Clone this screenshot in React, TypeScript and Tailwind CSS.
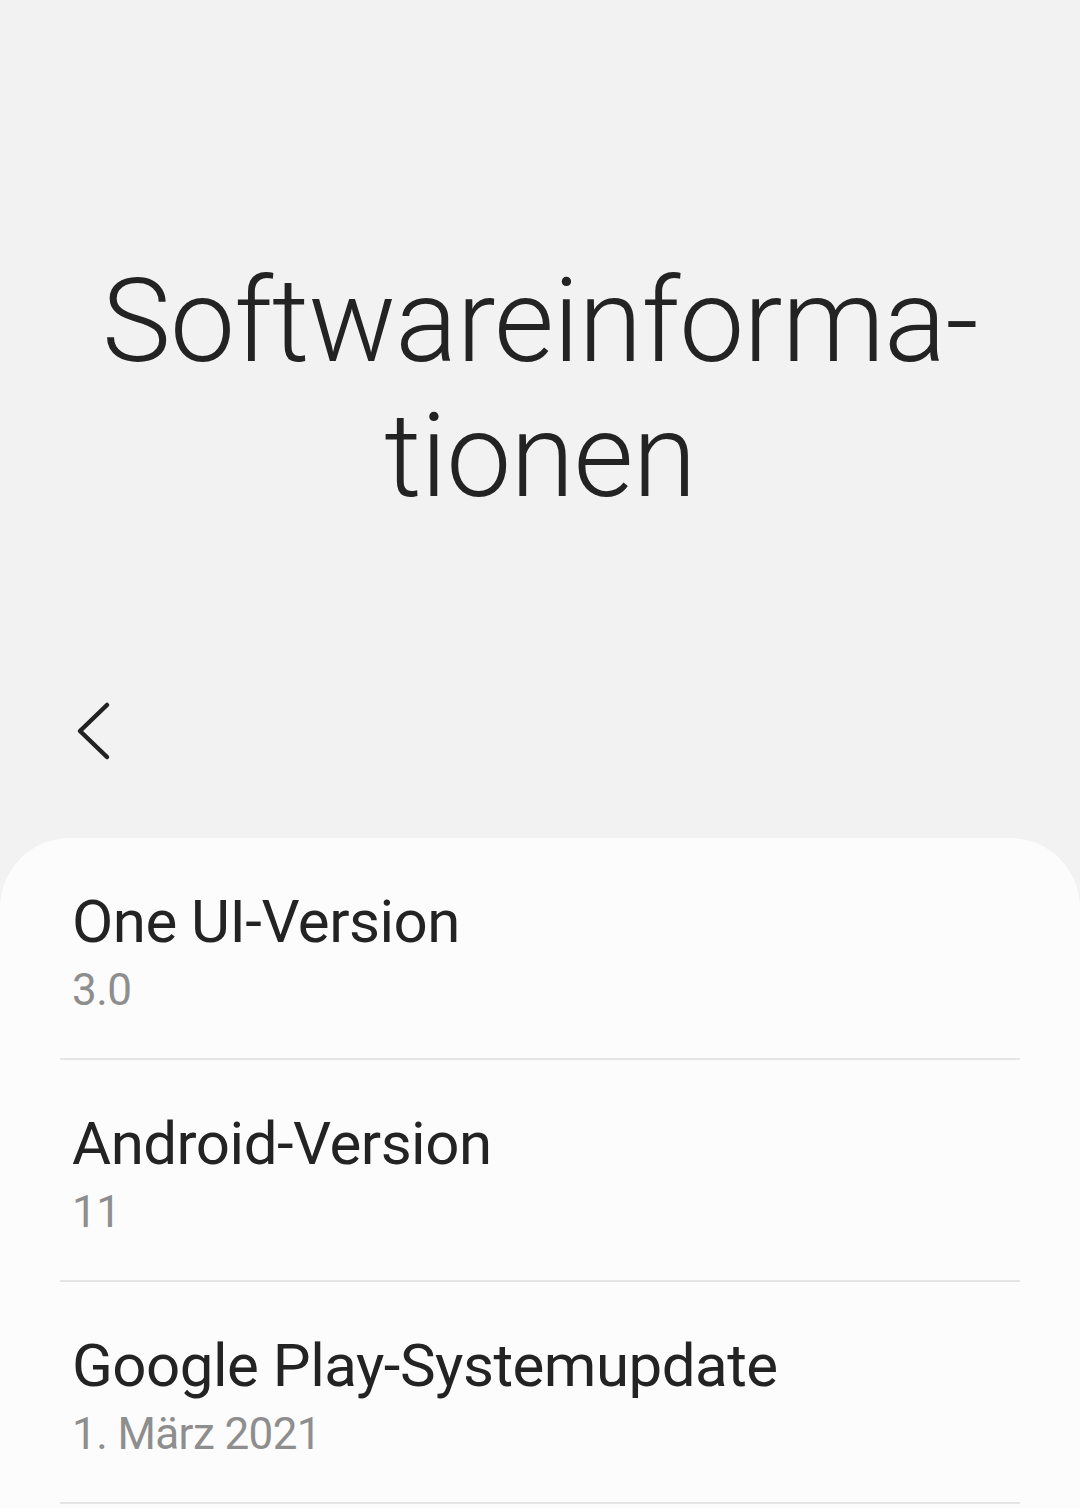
import React from "react";

const rows = [
  { title: "One UI-Version", value: "3.0" },
  { title: "Android-Version", value: "11" },
  { title: "Google Play-Systemupdate", value: "1. März 2021" },
];

export default function App() {
  return (
    <div
      className="w-[1080px] h-[1508px] overflow-hidden bg-[#f2f2f2] flex flex-col"
      style={{ fontFamily: "Roboto, 'Noto Sans', sans-serif" }}
    >
      <div className="h-[640px] flex items-end justify-center pb-[116px]">
        <h1 className="text-center text-[116px] leading-[135px] font-light text-[#232323] font-stretch-[88%] tracking-[-0.75px]">
          Softwareinforma-
          <br />
          tionen
        </h1>
      </div>
      <div className="h-[198px] pl-[76px] pt-[61px]">
        <svg width="36" height="60" viewBox="0 0 36 60" fill="none">
          <path
            d="M31 4 L4 30 L31 56"
            stroke="#222"
            strokeWidth="4.5"
            strokeLinecap="round"
            strokeLinejoin="round"
          />
        </svg>
      </div>
      <div className="flex-1 bg-[#fcfcfc] rounded-t-[70px] px-[60px]">
        {rows.map((r) => (
          <div key={r.title} className="pt-[53px] border-b-2 border-[#e4e4e4]">
            <div className="pl-[12px] text-[60px] leading-[62px] text-[#232323] font-stretch-[88%] tracking-[-0.5px]">
              {r.title}
            </div>
            <div className="pl-[12px] mt-[6px] text-[44px] leading-[62px] text-[#8e8e8e] pb-[37px] font-stretch-[88%] tracking-[-0.6px]">
              {r.value}
            </div>
          </div>
        ))}
      </div>
    </div>
  );
}
